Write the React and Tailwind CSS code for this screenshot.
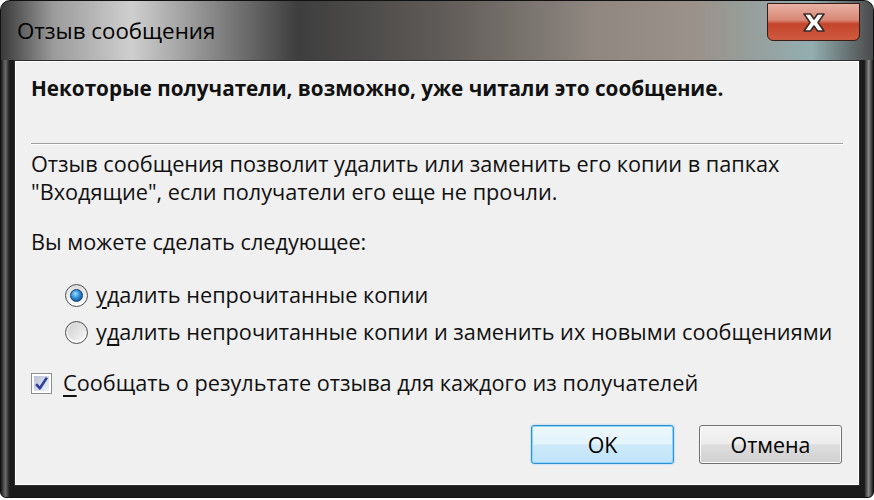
import React from "react";

const font = { fontFamily: '"Open Sans", "Noto Sans", "DejaVu Sans", sans-serif' };

const CloseX = () => (
  <svg width="26" height="21" viewBox="0 0 26 21">
    <path
      d="M3 2 H9.5 L13 7 L16.5 2 H23 L17 10.5 L23 19 H16.5 L13 14 L9.5 19 H3 L9 10.5 Z"
      fill="#ffffff"
      stroke="#3b2a2a"
      strokeWidth="1.6"
      strokeLinejoin="round"
    />
  </svg>
);

const Radio = ({ checked }) => (
  <div className="w-[23px] h-[23px] rounded-full border border-[#4f4f4f] bg-gradient-to-b from-[#dcdcdc] to-[#ffffff] flex items-center justify-center shrink-0">
    {checked ? (
      <div className="w-[13px] h-[13px] rounded-full bg-[radial-gradient(circle_at_40%_35%,#9ee0ff_0%,#2a8ad6_45%,#0b3f7a_100%)] border border-[#0e3e6e]" />
    ) : (
      <div className="w-[17px] h-[17px] rounded-full bg-gradient-to-br from-[#d0d0d0] to-[#f6f6f6]" />
    )}
  </div>
);

const Checkbox = () => (
  <div className="w-[21px] h-[21px] border border-[#8e8f8f] bg-white p-[2px] shrink-0">
    <div className="w-full h-full bg-gradient-to-br from-[#b8c2d6] to-[#eef2f8] flex items-center justify-center">
      <svg width="15" height="15" viewBox="0 0 14 14">
        <path d="M2 7.5 L5.5 11.5 L12 1.5" fill="none" stroke="#2b3f9b" strokeWidth="2.4" strokeLinejoin="round" />
      </svg>
    </div>
  </div>
);

export default function App() {
  return (
    <div style={font} className="w-[874px] h-[500px] bg-white overflow-hidden">
      <div className="w-[874px] h-[498px] rounded-t-[10px] rounded-b-[6px] border border-[#111] bg-[linear-gradient(180deg,#2a2a2a_0%,#1a1a1a_80%,#3a3a3a_92%,#151515_100%)] flex flex-col overflow-hidden">
        <div className="h-[59px] px-[13px] flex items-start justify-between shrink-0 bg-[linear-gradient(90deg,#3a3a3a_0%,#9b9b9b_6%,#cfcfcf_15%,#8a8a8a_24%,#3e3e3e_34%,#5e5a57_50%,#8f8780_68%,#9a928b_80%,#93aeb0_93%,#4a4a4a_100%)]">
          <div className="pt-[16px] pl-[3px] text-[22.3px] leading-[28px] text-black">Отзыв сообщения</div>
          <div className="mt-[2px] w-[93px] h-[38px] rounded-b-[6px] border border-[#3a1c16] bg-[linear-gradient(180deg,#e9b3a6_0%,#d88673_45%,#c4452c_55%,#cf5a3f_100%)] flex items-center justify-center">
            <CloseX />
          </div>
        </div>
        <div className="flex-1 flex flex-col px-[13px] pb-[11px] bg-[linear-gradient(90deg,#1b1b1b_0%,#6a6a6a_0.5%,#1b1b1b_1%,#1b1b1b_99%,#8a8a8a_99.5%,#1b1b1b_100%)]">
          <div className="flex-1 border border-[#2d2d2d] bg-[#f0f0f0] shadow-[inset_0_0_0_1px_#ffffff] px-[16px] pt-[13px] text-[21.7px] text-[#111] leading-[28px]">
            <div className="font-bold text-[20.7px]">
              Некоторые получатели, возможно, уже читали это сообщение.
            </div>
            <div className="mt-[41px] h-[2px] border-t border-[#a0a0a0] border-b border-b-white" />
            <div className="mt-[5px]">
              Отзыв сообщения позволит удалить или заменить его копии в папках
              <br />
              "Входящие", если получатели его еще не прочли.
            </div>
            <div className="mt-[22px]">Вы можете сделать следующее:</div>
            <div className="mt-[25px] pl-[34px] flex items-center gap-[8px]">
              <Radio checked />
              <span>
                <span className="underline underline-offset-[4px]">у</span>далить непрочитанные копии
              </span>
            </div>
            <div className="mt-[9px] pl-[34px] flex items-center gap-[8px]">
              <Radio />
              <span>
                у<span className="underline underline-offset-[4px]">д</span>алить непрочитанные копии и заменить их новыми сообщениями
              </span>
            </div>
            <div className="mt-[23px] flex items-center gap-[11px]">
              <Checkbox />
              <span>
                <span className="underline underline-offset-[4px]">С</span>ообщать о результате отзыва для каждого из получателей
              </span>
            </div>
            <div className="mt-[28px] flex justify-end gap-[25px] pr-[1px]">
              <button className="w-[143px] h-[39px] rounded-[3px] border border-[#2f8fd0] shadow-[inset_0_0_0_1px_#8fd8fa,0_0_2px_#7cc8f0] bg-[linear-gradient(180deg,#eef8fd_0%,#e2f3fc_48%,#cdeafa_52%,#bfe4f9_100%)] text-[21.4px] text-black">
                OK
              </button>
              <button className="w-[143px] h-[39px] rounded-[3px] border border-[#707070] shadow-[inset_0_0_0_1px_#fcfcfc] bg-[linear-gradient(180deg,#f4f4f4_0%,#ececec_48%,#dddddd_52%,#d0d0d0_100%)] text-[21.4px] text-black">
                Отмена
              </button>
            </div>
          </div>
        </div>
      </div>
    </div>
  );
}
